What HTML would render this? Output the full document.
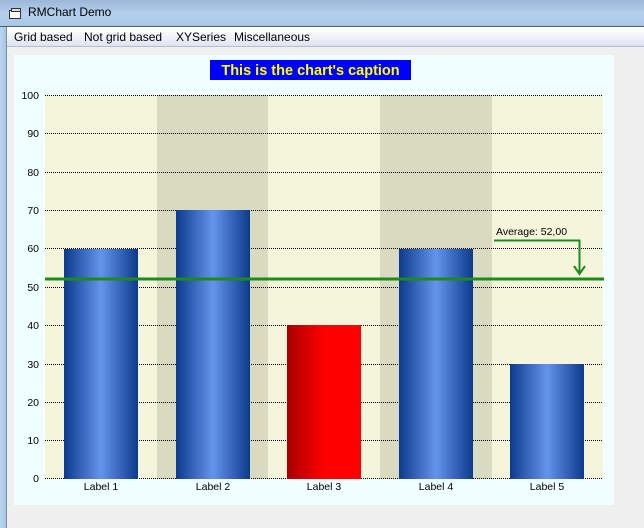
<!DOCTYPE html>
<html><head><meta charset="utf-8"><style>
body{margin:0;width:644px;height:528px;overflow:hidden;background:#f0f0f0;font-family:"Liberation Sans",sans-serif;position:relative}
.title{position:absolute;left:0;top:0;width:644px;height:26px;background:linear-gradient(180deg,#9cb8d8 0%,#b4d0ec 55%,#a8c6e6 100%);border-bottom:1px solid #4a5c78}
.title span{position:absolute;left:28px;top:5px;font-size:12px;color:#000}
.lframe{position:absolute;left:0;top:27px;width:6px;height:501px;background:linear-gradient(90deg,#bcd6f0,#a8c4e4);border-right:1px solid #7e8fa4}
.menu{position:absolute;left:7px;top:27px;width:637px;height:19px;background:linear-gradient(180deg,#ffffff 0%,#f4f6fb 40%,#dfe3f2 100%);border-bottom:1px solid #b6bcd4;font-size:12px}
.menu span{position:absolute;top:3px}
</style></head><body>
<div class="title">
<svg style="position:absolute;left:9px;top:8px" width="13" height="11"><rect x="0.5" y="2.5" width="11" height="8" fill="#fff" stroke="#333"/><rect x="2.5" y="0.5" width="9" height="3" fill="#ddd" stroke="#333"/></svg>
<span>RMChart Demo</span></div>
<div class="lframe"></div>
<div class="menu"><span style="left:7px">Grid based</span><span style="left:77px">Not grid based</span><span style="left:169px">XYSeries</span><span style="left:227px">Miscellaneous</span></div>
<svg style="position:absolute;left:0;top:0" width="644" height="528" font-family="Liberation Sans, sans-serif">
<defs>
<linearGradient id="b" x1="0" x2="1"><stop offset="0" stop-color="#0c3a8c"/><stop offset="0.5" stop-color="#6494ec"/><stop offset="1" stop-color="#0c3a8c"/></linearGradient>
<linearGradient id="r" x1="0" x2="1"><stop offset="0" stop-color="#a80000"/><stop offset="0.5" stop-color="#ff0000"/><stop offset="1" stop-color="#ff0000"/></linearGradient>
</defs>
<rect x="14" y="55" width="600" height="450" fill="#f0ffff"/>
<rect x="45" y="95" width="558" height="384" fill="#f5f5dc"/>
<rect x="157" y="95" width="111" height="384" fill="#dadac0"/>
<rect x="380" y="95" width="112" height="384" fill="#dadac0"/>
<g stroke="#000" stroke-width="1" stroke-dasharray="1,1">
<line x1="45" y1="95.5" x2="603" y2="95.5"/><line x1="45" y1="133.5" x2="603" y2="133.5"/><line x1="45" y1="172.5" x2="603" y2="172.5"/><line x1="45" y1="210.5" x2="603" y2="210.5"/><line x1="45" y1="248.5" x2="603" y2="248.5"/><line x1="45" y1="287.5" x2="603" y2="287.5"/><line x1="45" y1="325.5" x2="603" y2="325.5"/><line x1="45" y1="364.5" x2="603" y2="364.5"/><line x1="45" y1="402.5" x2="603" y2="402.5"/><line x1="45" y1="440.5" x2="603" y2="440.5"/><line x1="45" y1="478.5" x2="603" y2="478.5"/>
</g>
<g font-size="10.5" text-anchor="end" fill="#000">
<text x="39" y="99">100</text><text x="39" y="137">90</text><text x="39" y="176">80</text><text x="39" y="214">70</text><text x="39" y="252">60</text><text x="39" y="291">50</text><text x="39" y="329">40</text><text x="39" y="368">30</text><text x="39" y="406">20</text><text x="39" y="444">10</text><text x="39" y="482">0</text>
</g>
<rect x="64" y="249" width="74" height="230" fill="url(#b)"/>
<rect x="176" y="210" width="74" height="269" fill="url(#b)"/>
<rect x="287" y="325" width="74" height="154" fill="url(#r)"/>
<rect x="399" y="249" width="74" height="230" fill="url(#b)"/>
<rect x="510" y="364" width="74" height="115" fill="url(#b)"/>
<g font-size="10.5" text-anchor="middle" fill="#000">
<text x="101" y="490">Label 1</text><text x="213" y="490">Label 2</text><text x="324" y="490">Label 3</text><text x="436" y="490">Label 4</text><text x="547" y="490">Label 5</text>
</g>
<line x1="45" y1="279" x2="604" y2="279" stroke="#1e8a1e" stroke-width="3"/>
<polyline points="494,240.5 579.5,240.5 579.5,272" fill="none" stroke="#1e8a1e" stroke-width="2"/>
<path d="M574,266 L579.5,274 L585,266" fill="none" stroke="#1e8a1e" stroke-width="2"/>
<text x="496" y="235" font-size="10.5" fill="#000">Average: 52,00</text>
<rect x="210" y="60" width="201" height="20" fill="#0000ff"/>
<text x="310.5" y="75" font-size="14.5" font-weight="bold" fill="#ffff00" text-anchor="middle">This is the chart's caption</text>
</svg>
</body></html>
